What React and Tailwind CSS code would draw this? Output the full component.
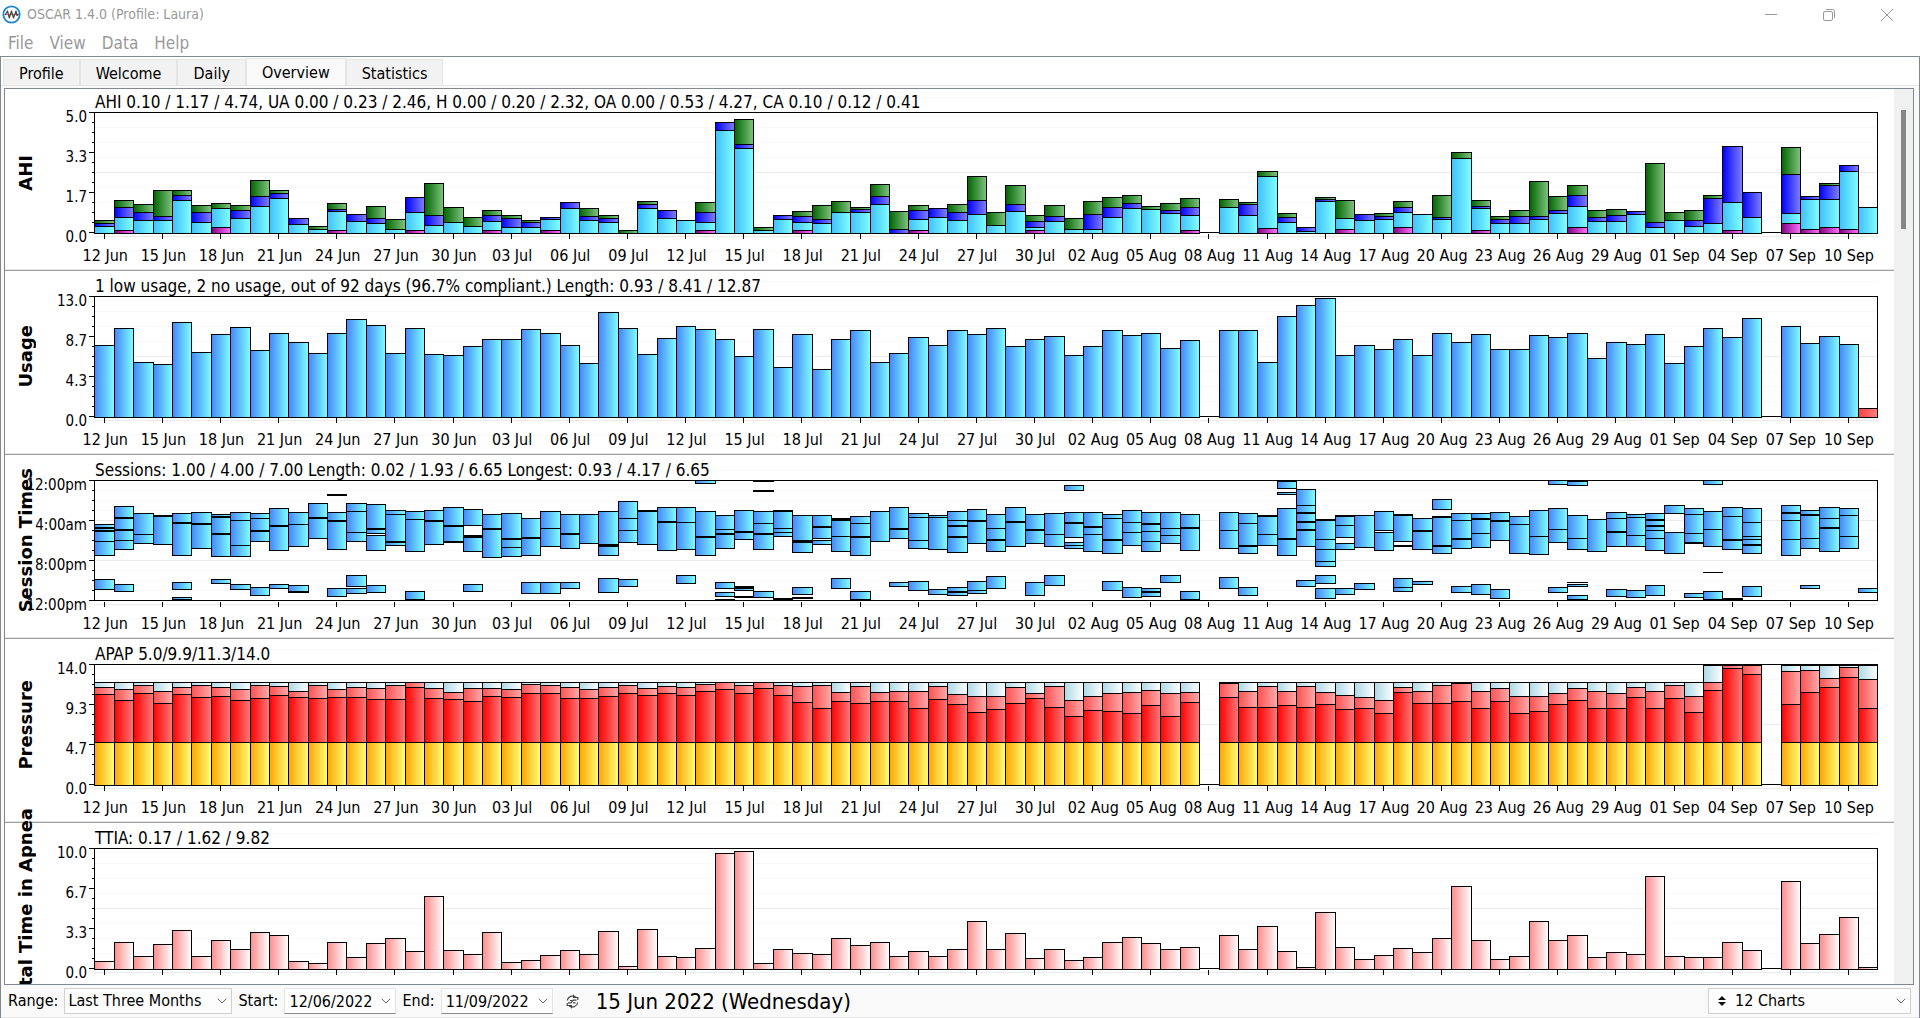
import React, { useState } from 'react';

const SLOTS = 92;
const PLOT_W = 1784;
const PLOT_H = 121;
const BASE = 121.5;

const GRADIENTS = {
    sky: ['#4486ff', '#7fffff'],
    cyan: ['#40bfff', '#7fffff'],
    blue: ['#0000ff', '#7f7fff'],
    green: ['#006400', '#80c480'],
    magenta: ['#800080', '#ff70ff'],
    rose: ['#ff8c8c', '#ffffff'],
    red: ['#ff0000', '#ff7878'],
    pink: ['#ff5050', '#ffaaaa'],
    ice: ['#add8e6', '#ffffff'],
    amber: ['#ffa500', '#ffff78'],
    low: ['#ff4040', '#ff8080'],
};

// Running tops per day: CA, OA, H, UA
const ahi = [
    [0, 7, 10, 13], [3, 16, 26, 33], [0, 13, 21, 29], [0, 13, 17, 43], [0, 33, 38, 43], [0, 11, 21, 28], [6, 25, 25, 30], [0, 15, 23, 28],
    [0, 27, 37, 53], [0, 35, 40, 43], [0, 9, 15, 15], [0, 4, 4, 7], [3, 22, 24, 30], [0, 12, 19, 19], [0, 10, 15, 27], [0, 4, 4, 14],
    [3, 21, 36, 36], [0, 8, 18, 50], [0, 11, 11, 26], [0, 7, 7, 16], [3, 12, 18, 23], [0, 6, 15, 18], [0, 6, 11, 13], [3, 14, 16, 16],
    [0, 25, 31, 31], [0, 13, 17, 25], [0, 11, 15, 18], [0, 0, 0, 3], [0, 25, 29, 32], [0, 15, 23, 23], [0, 13, 13, 13], [3, 11, 21, 31],
    [0, 103, 111, 111], [0, 85, 89, 114], [0, 3, 3, 6], [0, 14, 18, 18], [3, 11, 17, 22], [0, 10, 14, 28], [0, 21, 21, 32], [0, 21, 24, 26],
    [0, 29, 37, 49], [0, 0, 4, 22], [3, 14, 23, 28], [0, 16, 25, 25], [0, 13, 21, 29], [0, 19, 33, 57], [0, 8, 8, 21], [0, 22, 29, 48],
    [3, 6, 12, 18], [0, 12, 17, 28], [0, 4, 4, 15], [0, 4, 19, 32], [0, 16, 26, 36], [0, 25, 30, 38], [0, 24, 24, 27], [0, 20, 23, 30],
    [3, 18, 26, 35], null, [0, 26, 26, 34], [0, 18, 29, 31], [5, 57, 57, 62], [0, 11, 16, 20], [0, 2, 6, 6], [0, 32, 34, 36],
    [4, 15, 15, 33], [0, 13, 19, 19], [0, 14, 17, 20], [6, 21, 26, 32], [0, 19, 19, 19], [0, 14, 16, 38], [0, 75, 75, 81], [3, 25, 27, 33],
    [0, 10, 14, 17], [0, 10, 17, 23], [0, 14, 17, 52], [0, 20, 23, 37], [6, 27, 38, 48], [0, 12, 16, 23], [0, 12, 18, 24], [0, 19, 22, 22],
    [0, 6, 11, 70], [0, 13, 13, 21], [0, 7, 13, 23], [0, 10, 35, 38], [3, 31, 87, 87], [0, 16, 41, 41], null, [10, 20, 59, 86],
    [4, 34, 37, 37], [6, 34, 48, 50], [4, 62, 68, 68], [0, 26, 26, 26],
];

const usage = [
    72, 89, 55, 53, 95, 65, 83, 90, 67, 84, 75, 64, 84, 98, 92, 64, 89, 63, 62, 71, 78, 78, 88, 84, 72, 54, 105, 89, 63, 79, 91,
    88, 78, 61, 88, 50, 83, 48, 78, 87, 55, 64, 80, 72, 87, 83, 89, 71, 78, 81, 62, 71, 87, 82, 84, 69, 77, null, 87, 87, 55, 101,
    112, 119, 62, 72, 68, 78, 62, 84, 75, 83, 68, 68, 82, 80, 84, 59, 75, 73, 83, 54, 71, 89, 80, 99, null, 91, 74, 81, 73, 9,
];

const ttia = [
    8, 27, 13, 25, 39, 13, 29, 20, 37, 34, 8, 6, 27, 12, 26, 31, 18, 73, 19, 15, 37, 7, 9, 14, 19, 15, 38, 3, 40, 13, 12,
    21, 116, 118, 6, 20, 16, 15, 31, 24, 27, 13, 18, 13, 20, 48, 20, 36, 11, 20, 9, 12, 27, 32, 26, 20, 22, null, 34, 20, 43, 18,
    2, 57, 22, 10, 14, 21, 17, 31, 83, 29, 10, 13, 48, 29, 34, 12, 17, 15, 93, 13, 12, 12, 27, 19, null, 88, 26, 35, 52, 2,
];

// Median, 95% and (when it is not the usual 103) the maximum
const pressure = [
    [91, 98], [85, 96], [92, 100], [82, 94], [91, 98], [88, 100], [89, 98], [85, 96], [87, 100], [90, 99], [88, 94], [87, 100],
    [88, 96], [88, 98], [86, 97], [86, 100], [98, 103], [87, 97], [86, 93], [84, 97], [89, 97], [88, 96], [92, 101], [92, 100],
    [87, 98], [87, 96], [89, 98], [92, 100], [90, 97], [92, 99], [90, 98], [94, 101], [96, 103], [92, 100], [97, 103], [90, 100],
    [83, 99], [77, 100], [84, 93], [82, 99], [84, 93], [84, 94], [77, 94], [86, 99], [81, 91], [73, 89], [76, 89], [82, 98],
    [87, 92], [78, 99], [69, 85], [75, 89], [74, 92], [72, 93], [80, 95], [69, 92], [83, 93], null, [88, 102], [78, 94],
    [78, 99], [80, 94], [78, 99], [81, 93], [76, 90], [77, 88], [72, 85], [93, 98], [82, 94], [82, 100], [84, 102], [77, 94],
    [84, 97], [72, 89], [74, 89], [81, 92], [85, 97], [77, 94], [77, 92], [88, 98], [77, 94], [87, 100], [73, 89], [95, 103, 120],
    [117, 120, 120], [111, 120, 120], null, [81, 114, 120], [93, 115, 120], [98, 107, 120], [108, 118, 120], [77, 106, 120],
];

// Session spans measured down from noon, chained where one session follows another
const sessions = [
    '44-47 48-50 51-61-75 99-109', '26-37 38-49 50-60-69 104-111', '33-54-63', '35-36-64', '33-42 43-75 102-109 117-119',
    '32-43 44-68', '34-36 37-53 54-76 99-103', '32-40-65-76 104-109', '33-38-50 51-61 107-115', '28-45 46-70 104-108',
    '32-44-66 105-111-112', '23-37 38-58', '14-15 32-40 41-69 108-116', '23-31-52-61 95-106 108-113', '24-48 49-53 55-70 105-112',
    '30-34-61 62-65', '31-39-71 111-119', '30-40 41-64', '27-45 46-61-62', '29-45 55-56-57-71 104-111', '34-48 49-77',
    '33-58 59-67-76', '38-57 58-75 102-113', '31-48-66 102-113', '34-53 54-68 102-108', '34-63', '31-64-65-66-75 98-112',
    '21-38-50-62 99-106', '30-31-64', '27-41 42-70', '27-42-69 95-103', '0-3 31-56 57-75',
    '35-49-53 54-68 102-108 112-116 119-119', '30-51 52-59 106-107-108-110 116-117', '0-1 10-11 31-43-53 54-69 111-117',
    '30-31-48-52-56 118-119', '35-60-61-62-72 107-114 117-118', '35-46 47-58 60-64', '38-39-40-56-71 98-108',
    '36-43-56 57-75 111-119', '31-61', '27-48 49-58 102-106', '33-37-60-68 101-110', '35-37-69 109-114',
    '31-40-45 46-56 57-72 107-111 112-115', '29-40 41-63 101-110-113', '34-48-59 60-71 96-108', '27-41 42-66',
    '34-49 50-63 102-115', '33-54-66 95-105', '5-10 32-42 43-57 62-65-68', '32-46 47-54-71', '34-38-59 60-73 101-110',
    '30-42-52-65 107-117', '32-43 44-51-61-71 108-111 112-116', '32-48-55-63 95-102', '34-47 48-70 111-119', '',
    '32-50-68 97-108', '33-43-65 66-73 107-115', '35-36-54-65', '1-8 12-14 28-58 59-75', '9-25-32 33-41 42-49 50-66 100-106',
    '39-40-59-69-81-86 95-103 108-118', '35-36-45-57 63-69 108-114', '35-67 103-109', '31-50 52-70', '34-35-61 65-66 98-107-111',
    '38-50 51-69 101-104', '19-29 36-37-65 66-73', '33-40-58 59-68 106-112', '33-38 39-53-67 104-114', '32-40 41-60 109-118',
    '36-44-73', '30-56-74', '0-4 28-49-62 107-112', '1-5 35-58-69 102-102 104-106 115-119', '39-71', '32-38-51 52-66 109-116',
    '34-37-55-66 110-117', '33-39 40-45 46-50-58-70 105-115', '25-33 52-73', '28-34-53-62 62-63 113-117',
    '0-4 31-49-66 92-92 111-119', '27-36-59 60-69 118-119', '28-42-56-59-64 65-73 106-116', '', '25-32 33-40-59-75',
    '30-34 35-58-68 105-108', '27-38-47 48-71', '28-35-56-68', '108-112',
];

const dateLabels = Array.from({ length: 31 }, (_, i) => {
    const d = new Date(Date.UTC(2022, 5, 12 + i * 3));
    const month = ['Jun', 'Jul', 'Aug', 'Sep'][d.getUTCMonth() - 5];
    return `${String(d.getUTCDate()).padStart(2, '0')} ${month}`;
});

const slotX = (i) => Math.ceil((i * (PLOT_W - 1)) / SLOTS) + 0.5;

const stack = (tops, fills) => {
    let from = 0;
    const boxes = [];
    tops.forEach((top, i) => {
        if (top > from) boxes.push({ y: BASE - top, h: top - from, fill: fills[i] });
        from = top;
    });
    return boxes;
};

const spans = (text) => text.split(' ').filter(Boolean).flatMap((chain) => {
    const points = chain.split('-').map(Number);
    return points.slice(1).map((p, i) => ({ y: points[i] + 0.5, h: p - points[i], fill: 'sky' }));
});

const CHARTS = [
    {
        name: 'AHI',
        summary: 'AHI 0.10 / 1.17 / 4.74, UA 0.00 / 0.23 / 2.46, H 0.00 / 0.20 / 2.32, OA 0.00 / 0.53 / 4.27, CA 0.10 / 0.12 / 0.41',
        scale: ['5.0', '3.3', '1.7', '0.0'],
        days: ahi.map((d) => (d ? stack(d, ['magenta', 'cyan', 'blue', 'green']) : [])),
    },
    {
        name: 'Usage',
        summary: '1 low usage, 2 no usage, out of 92 days (96.7% compliant.) Length: 0.93 / 8.41 / 12.87',
        scale: ['13.0', '8.7', '4.3', '0.0'],
        days: usage.map((v) => (v ? stack([v], [v < 20 ? 'low' : 'sky']) : [])),
    },
    {
        name: 'Session Times',
        summary: 'Sessions: 1.00 / 4.00 / 7.00 Length: 0.02 / 1.93 / 6.65 Longest: 0.93 / 4.17 / 6.65',
        scale: ['12:00pm', '4:00am', '8:00pm', '12:00pm'],
        fine: true,
        days: sessions.map(spans),
    },
    {
        name: 'Pressure',
        summary: 'APAP 5.0/9.9/11.3/14.0',
        scale: ['14.0', '9.3', '4.7', '0.0'],
        days: pressure.map((d) => (d ? stack([43, d[0], d[1], d[2] || 103], ['amber', 'red', 'pink', 'ice']) : [])),
    },
    {
        name: 'Total Time in Apnea',
        summary: 'TTIA: 0.17 / 1.62 / 9.82',
        scale: ['10.0', '6.7', '3.3', '0.0'],
        hideDates: true,
        days: ttia.map((v) => (v ? stack([v], ['rose']) : [])),
    },
];

function Plot({ days, fine }) {
    const step = fine ? 10 : 15;
    const major = fine ? 40 : 60;
    const grid = [];
    for (let y = -step; y < 120; y += step) {
        if (y !== 0) grid.push(y);
    }
    return (
        <svg className="block h-[121px] min-w-0 flex-1 overflow-visible" viewBox={`0 0 ${PLOT_W} ${PLOT_H}`} preserveAspectRatio="none" shapeRendering="crispEdges">
            {grid.map((y) => (
                <rect key={y} x="0" y={y} width={PLOT_W} height="1" fill={y > 0 && y % major === 0 ? '#ebebeb' : '#f8f8f8'} />
            ))}
            <rect x="0" y="124" width={PLOT_W} height="1" fill="#ebebeb" />
            <rect x="0" y="139" width={PLOT_W} height="1" fill="#f8f8f8" />
            <rect x="0.5" y="0.5" width={PLOT_W - 1} height="120" fill="none" stroke="#000" />
            {days.map((boxes, i) => boxes.map((b, n) => (
                <rect key={`${i}-${n}`} x={slotX(i)} y={b.y} width={slotX(i + 1) - slotX(i)} height={Math.max(b.h, 0.1)} fill={`url(#g-${b.fill})`} stroke="#000" />
            )))}
            {dateLabels.map((label, k) => (
                <rect key={label} x={Math.round(((k * 3 + 0.5) * (PLOT_W - 1)) / SLOTS)} y="122" width="1" height="5" fill="#000" />
            ))}
        </svg>
    );
}

function ChartPanel({ chart, first }) {
    return (
        <section className="shrink-0 border-b border-[#a0a0a0] pr-4 shadow-[inset_0_-1px_0_#e3e3e3]">
            <h2 className={`relative z-10 flex items-end pl-[90px] text-[17px] leading-5 whitespace-pre ${first ? 'h-[23px]' : 'h-[25px]'}`}>{chart.summary}</h2>
            <div className="flex h-[121px]">
                <div className="flex w-[41px] shrink-0 items-center justify-center">
                    <span className="rotate-180 font-['DejaVu_Sans',sans-serif] text-[18px] leading-[20px] font-bold whitespace-nowrap [writing-mode:vertical-rl]">{chart.name}</span>
                </div>
                <div className="w-[43px] shrink-0 pr-[2px] text-[15px]">
                    {chart.scale.map((value, i) => (
                        <div key={i} className="flex h-10 justify-end leading-[10px]">{value}</div>
                    ))}
                </div>
                <svg className="h-[121px] w-[5px] shrink-0" viewBox="0 0 5 121" shapeRendering="crispEdges">
                    {Array.from({ length: 13 }, (_, i) => (
                        <rect key={i} x={i % 4 ? 3 : 0} y={i * 10} width="5" height="1" fill="#000" />
                    ))}
                </svg>
                <Plot days={chart.days} fine={chart.fine} />
            </div>
            <div className="relative z-10 flex h-[37px] pl-[89px]">
                {!chart.hideDates && (
                    <div className="-ml-[1%] grid flex-1 grid-cols-[repeat(31,minmax(0,1fr))] pt-[13px]">
                        {dateLabels.map((label) => (
                            <span key={label} className="flex justify-center text-[16px] leading-5 whitespace-nowrap">{label}</span>
                        ))}
                    </div>
                )}
            </div>
        </section>
    );
}

function Chevron() {
    return (
        <svg className="pointer-events-none absolute right-[5px] h-[6px] w-[10px]" viewBox="0 0 10 6" fill="none" stroke="#666">
            <path d="M0.8 0.8 5 5 9.2 0.8" />
        </svg>
    );
}

function Field({ id, label, value, onChange }) {
    return (
        <>
            <label htmlFor={id}>{label}</label>
            <div className="relative flex items-center">
                <input id={id} value={value} onChange={(e) => onChange(e.target.value)} className="h-[26px] w-[112px] border border-[#e5e5e5] border-b-[#8a8a8a] bg-white pl-1 outline-none" />
                <Chevron />
            </div>
        </>
    );
}

export default function App() {
    const [tab, setTab] = useState('Overview');
    const [start, setStart] = useState('12/06/2022');
    const [end, setEnd] = useState('11/09/2022');

    return (
        <div className="flex h-screen flex-col overflow-hidden bg-white font-[Tahoma,'DejaVu_Sans_Condensed','Noto_Sans',sans-serif] text-[16px] text-black">
            <svg className="absolute h-0 w-0" aria-hidden="true">
                <defs>
                    {Object.entries(GRADIENTS).map(([name, [from, to]]) => (
                        <linearGradient key={name} id={`g-${name}`}>
                            <stop offset="0" stopColor={from} />
                            <stop offset="1" stopColor={to} />
                        </linearGradient>
                    ))}
                </defs>
            </svg>

            {/* Title bar */}
            <header className="flex h-[29px] shrink-0 items-center text-[#999]">
                <svg className="ml-[2px] h-[19px] w-[19px]" viewBox="0 0 19 19" fill="none">
                    <circle cx="9.5" cy="9.5" r="8.2" fill="#fff" stroke="#1c86cf" strokeWidth="1.8" />
                    <path d="M2.5 9.5h14" stroke="#e06a6a" strokeWidth="1" />
                    <path d="M3 10 5.5 6l1.800 7L9.500 6l2 7L14 6l1 4.500 1.500-1.500" stroke="#444" strokeWidth="1.2" strokeLinejoin="round" />
                </svg>
                <h1 className="ml-[6px] text-[14px]">OSCAR 1.4.0 (Profile: Laura)</h1>
                <div className="ml-auto flex h-full">
                    <button aria-label="Minimize" className="flex h-full w-[58px] items-center justify-center">
                        <svg className="h-3 w-3" viewBox="0 0 12 12"><path d="M0 5.5h12" stroke="#999" /></svg>
                    </button>
                    <button aria-label="Restore" className="flex h-full w-[58px] items-center justify-center">
                        <svg className="h-3 w-3" viewBox="0 0 12 12" fill="none" stroke="#999">
                            <rect x="0.5" y="2.5" width="9" height="9" rx="1.5" />
                            <path d="M3 .5h6.5a2 2 0 0 1 2 2V9" />
                        </svg>
                    </button>
                    <button aria-label="Close" className="mr-1 flex h-full w-[58px] items-center justify-center">
                        <svg className="h-3 w-3" viewBox="0 0 12 12"><path d="m0 0 12 12M12 0 0 12" stroke="#999" /></svg>
                    </button>
                </div>
            </header>

            <nav className="flex h-[27px] shrink-0 items-center gap-4 pt-[2px] pl-2 text-[17px] text-[#999]">
                {['File', 'View', 'Data', 'Help'].map((item) => <button key={item}>{item}</button>)}
            </nav>

            <main className="flex min-h-0 flex-1 flex-col border border-b-0 border-[#828790]">
                <div role="tablist" className="flex h-[28px] shrink-0 items-end pl-[2px]">
                    {['Profile', 'Welcome', 'Daily', 'Overview', 'Statistics'].map((name) => (
                        <button
                            key={name}
                            role="tab"
                            aria-selected={tab === name}
                            onClick={() => setTab(name)}
                            className={`border border-b-0 border-[#e5e5e5] px-[15px] pt-[2px] leading-5 ${tab === name ? 'h-[27px] bg-[#f9f9f9]' : 'h-[26px] bg-[#f2f2f2]'}`}
                        >
                            {name}
                        </button>
                    ))}
                </div>

                <div className="flex min-h-0 flex-1 flex-col border-t border-[#e5e5e5] bg-[#f9f9f9] pt-[2px]">
                    <div className="mr-[5px] ml-[3px] flex min-h-0 flex-1 overflow-hidden border border-[#828790] bg-white">
                        <div className="flex min-w-0 flex-1 flex-col">
                            {CHARTS.map((chart, i) => <ChartPanel key={chart.name} chart={chart} first={i === 0} />)}
                        </div>
                        <div className="w-[19px] shrink-0 bg-[#f0f0f0] pt-[21px]">
                            <div className="mx-auto h-[119px] w-[5px] bg-[#868686]" />
                        </div>
                    </div>

                    {/* Range controls */}
                    <footer className="flex h-[33px] shrink-0 items-center gap-[6px] border-b border-[#e5e5e5] pr-2 pl-[7px]">
                        <label htmlFor="range">Range:</label>
                        <div className="relative flex items-center">
                            <select id="range" className="h-[26px] w-[168px] appearance-none border border-[#d0d0d0] bg-[#fdfdfd] pl-[3px] outline-none">
                                <option>Last Three Months</option>
                            </select>
                            <Chevron />
                        </div>
                        <Field id="start" label="Start:" value={start} onChange={setStart} />
                        <Field id="end" label="End:" value={end} onChange={setEnd} />
                        <button aria-label="Reset range" className="mx-[6px]">
                            <svg className="h-[15px] w-[15px]" viewBox="0 0 15 15" fill="none" stroke="#444" strokeWidth="1.2">
                                <path d="M2.200 6.500A5.500 5.500 0 0 1 11 3.200M12.800 8.500A5.500 5.500 0 0 1 4 11.800" />
                                <path d="M8.500 0.800v2.700h4.300V6M6.500 14.200v-2.700H2.200V9" />
                                <path d="M3 8.800h3l2.200-2.600h3.300M5 6.500h2M8 8.800h2.500" />
                            </svg>
                        </button>
                        <output className="ml-1 text-[22px]">15 Jun 2022 (Wednesday)</output>
                        <div className="relative ml-auto flex items-center">
                            <svg className="absolute left-[10px] h-[10px] w-[8px]" viewBox="0 0 8 10"><path d="M4 0 8 4H0zM4 10 0 6h8z" fill="#111" /></svg>
                            <select aria-label="Charts" className="h-[26px] w-[203px] appearance-none border border-[#d0d0d0] bg-[#fdfdfd] pl-[26px] outline-none">
                                <option>12 Charts</option>
                            </select>
                            <Chevron />
                        </div>
                    </footer>
                </div>
            </main>
        </div>
    );
}
